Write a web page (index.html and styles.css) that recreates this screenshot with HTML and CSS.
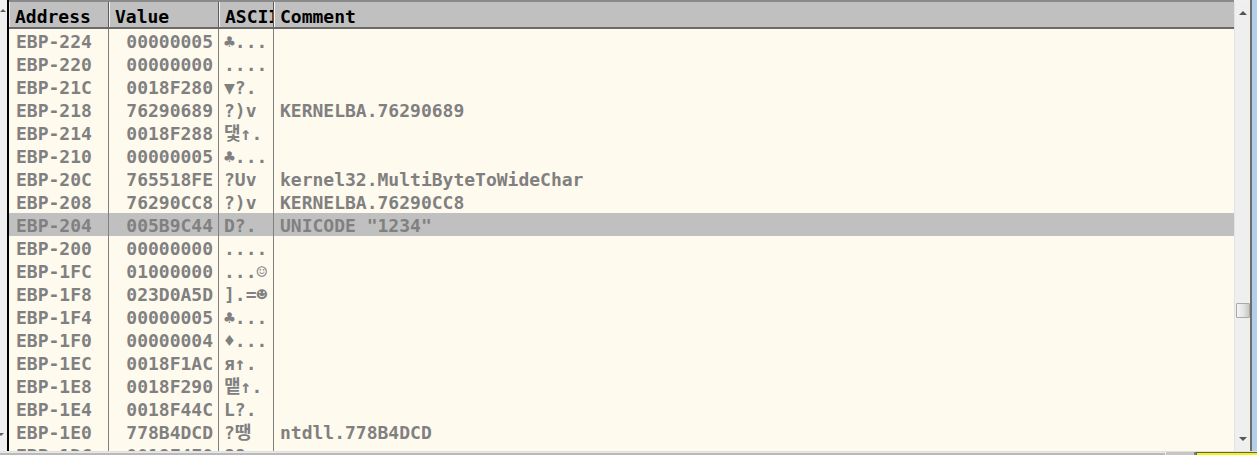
FILE: index.html
```html
<!DOCTYPE html>
<html>
<head>
<meta charset="utf-8">
<link rel="stylesheet" href="styles.css">
</head>
<body>
<div class="window">
  <div class="main">
    <div class="lstrip"><span class="larrow-up"></span><span class="larrow-dn"></span></div>
    <div class="edge"></div>
    <div class="pane">
      <div class="hdr">
        <div class="hc c-addr">Address</div>
        <div class="hc c-val">Value</div>
        <div class="hc c-asc">ASCII</div>
        <div class="hc c-cmt">Comment</div>
      </div>
      <div class="rows">
        <div class="row"><div class="c c-addr">EBP-224</div><div class="c c-val">00000005</div><div class="c c-asc">♣...</div><div class="c c-cmt"></div></div>
        <div class="row"><div class="c c-addr">EBP-220</div><div class="c c-val">00000000</div><div class="c c-asc">....</div><div class="c c-cmt"></div></div>
        <div class="row"><div class="c c-addr">EBP-21C</div><div class="c c-val">0018F280</div><div class="c c-asc">▼?.</div><div class="c c-cmt"></div></div>
        <div class="row"><div class="c c-addr">EBP-218</div><div class="c c-val">76290689</div><div class="c c-asc">?)v</div><div class="c c-cmt">KERNELBA.76290689</div></div>
        <div class="row"><div class="c c-addr">EBP-214</div><div class="c c-val">0018F288</div><div class="c c-asc">댗↑.</div><div class="c c-cmt"></div></div>
        <div class="row"><div class="c c-addr">EBP-210</div><div class="c c-val">00000005</div><div class="c c-asc">♣...</div><div class="c c-cmt"></div></div>
        <div class="row"><div class="c c-addr">EBP-20C</div><div class="c c-val">765518FE</div><div class="c c-asc">?Uv</div><div class="c c-cmt">kernel32.MultiByteToWideChar</div></div>
        <div class="row"><div class="c c-addr">EBP-208</div><div class="c c-val">76290CC8</div><div class="c c-asc">?)v</div><div class="c c-cmt">KERNELBA.76290CC8</div></div>
        <div class="row sel"><div class="c c-addr">EBP-204</div><div class="c c-val">005B9C44</div><div class="c c-asc">D?.</div><div class="c c-cmt">UNICODE "1234"</div></div>
        <div class="row"><div class="c c-addr">EBP-200</div><div class="c c-val">00000000</div><div class="c c-asc">....</div><div class="c c-cmt"></div></div>
        <div class="row"><div class="c c-addr">EBP-1FC</div><div class="c c-val">01000000</div><div class="c c-asc">...☺</div><div class="c c-cmt"></div></div>
        <div class="row"><div class="c c-addr">EBP-1F8</div><div class="c c-val">023D0A5D</div><div class="c c-asc">].=☻</div><div class="c c-cmt"></div></div>
        <div class="row"><div class="c c-addr">EBP-1F4</div><div class="c c-val">00000005</div><div class="c c-asc">♣...</div><div class="c c-cmt"></div></div>
        <div class="row"><div class="c c-addr">EBP-1F0</div><div class="c c-val">00000004</div><div class="c c-asc">♦...</div><div class="c c-cmt"></div></div>
        <div class="row"><div class="c c-addr">EBP-1EC</div><div class="c c-val">0018F1AC</div><div class="c c-asc">я↑.</div><div class="c c-cmt"></div></div>
        <div class="row"><div class="c c-addr">EBP-1E8</div><div class="c c-val">0018F290</div><div class="c c-asc">맽↑.</div><div class="c c-cmt"></div></div>
        <div class="row"><div class="c c-addr">EBP-1E4</div><div class="c c-val">0018F44C</div><div class="c c-asc">L?.</div><div class="c c-cmt"></div></div>
        <div class="row"><div class="c c-addr">EBP-1E0</div><div class="c c-val">778B4DCD</div><div class="c c-asc">?땡</div><div class="c c-cmt">ntdll.778B4DCD</div></div>
        <div class="row"><div class="c c-addr">EBP-1DC</div><div class="c c-val">0018F4E0</div><div class="c c-asc">??.</div><div class="c c-cmt"></div></div>
      </div>
    </div>
    <div class="vscroll">
      <span class="arrow-up"></span>
      <div class="track"><div class="thumb"></div></div>
      <span class="arrow-dn"></span>
    </div>
    <div class="redge"></div>
    <div class="blue"></div>
  </div>
  <div class="bottombar">
    <div class="bb-fill"></div>
    <div class="bb-tab"></div>
    <div class="bb-tab2"></div>
    <div class="bb-yellow"></div>
  </div>
</div>
</body>
</html>
```

FILE: styles.css
```css
html, body {
  margin: 0;
  padding: 0;
  width: 1257px;
  height: 455px;
  overflow: hidden;
  background: #f0f0f0;
}

.window {
  display: flex;
  flex-direction: column;
  width: 1257px;
  height: 455px;
}

.main {
  display: flex;
  height: 451px;
  overflow: hidden;
}

.lstrip {
  width: 7px;
  background: #f0f0f0;
  display: flex;
  flex-direction: column;
  justify-content: space-between;
  padding: 9px 0 15px 0;
  box-sizing: border-box;
}

.larrow-up {
  display: block;
  width: 0;
  height: 0;
  border-left: 3px solid transparent;
  border-right: 3px solid transparent;
  border-bottom: 3px solid #606060;
}

.larrow-dn {
  display: block;
  width: 0;
  height: 0;
  margin-left: -2px;
  border-left: 3px solid transparent;
  border-right: 3px solid transparent;
  border-top: 3px solid #606060;
}

.edge {
  width: 2px;
  background: #000;
}

.pane {
  width: 1225px;
  background: #fffaee;
  overflow: hidden;
  font-family: "DejaVu Sans Mono", "Noto Sans CJK KR", monospace;
  font-weight: bold;
  font-size: 18px;
}

.hdr {
  display: grid;
  grid-template-columns: 100px 110px 55px 1fr;
  height: 29px;
  box-sizing: border-box;
  border-top: 2px solid #8a8a8a;
  border-bottom: 2px solid #6a6a6a;
  background: #c0c0c0;
  color: #000;
}

.hc {
  box-sizing: border-box;
  padding: 5px 0 0 6px;
  line-height: 20px;
  white-space: nowrap;
  overflow: hidden;
  border-right: 1px solid #5a5a5a;
  box-shadow: inset 1px 0 0 #f4f4f4;
}

.hc.c-cmt {
  border-right: none;
}

.hdr .c-addr {
  box-shadow: inset 1px 0 0 #e8e8e8;
}

.rows {
  color: #808080;
}

.row {
  display: grid;
  grid-template-columns: 100px 110px 55px 1fr;
  height: 23px;
}

.row.sel {
  background: #c0c0c0;
}

.c {
  box-sizing: border-box;
  padding: 3px 0 0 7px;
  line-height: 20px;
  white-space: nowrap;
  overflow: hidden;
  border-right: 1px solid #808080;
}

.c.c-val {
  text-align: right;
  padding: 3px 5px 0 0;
}

.c.c-asc {
  padding-left: 5px;
}

.c.c-cmt {
  border-right: none;
  padding-left: 6px;
}

.vscroll {
  width: 16px;
  margin-top: 2px;
  background: #efefef;
  border-left: 1px solid #e2e2e2;
  box-sizing: border-box;
  display: flex;
  flex-direction: column;
  align-items: center;
  padding: 9px 0 10px 0;
}

.arrow-up {
  display: block;
  width: 0;
  height: 0;
  border-left: 4px solid transparent;
  border-right: 4px solid transparent;
  border-bottom: 4px solid #555;
}

.arrow-dn {
  display: block;
  width: 0;
  height: 0;
  border-left: 4px solid transparent;
  border-right: 4px solid transparent;
  border-top: 4px solid #555;
}

.track {
  flex: 1;
  width: 100%;
  display: flex;
  flex-direction: column;
  align-items: center;
  padding-top: 288px;
  box-sizing: border-box;
}

.thumb {
  width: 14px;
  height: 15px;
  box-sizing: border-box;
  border: 1px solid #a9a9a9;
  border-radius: 1px;
  background: linear-gradient(to right, #f4f4f4 0%, #e6e6e6 50%, #c8c8c8 100%);
}

.redge {
  width: 2px;
  background: #6d6d6d;
}

.blue {
  width: 5px;
  background: #b4cfe9;
}

.bottombar {
  display: flex;
  height: 4px;
  background: #c8c8c8;
  border-top: 1px solid #e0e0e0;
  box-sizing: border-box;
}

.bb-fill {
  flex: 1;
  background: #b9b9b9;
  border-top: 1px solid #e8e8e8;
}

.bb-tab {
  width: 28px;
  background: #c6c6c6;
  border-left: 1px solid #f0f0f0;
}

.bb-tab2 {
  width: 2px;
  background: #808080;
}

.bb-yellow {
  width: 61px;
  background: #f7f500;
  border-left: 1px solid #606060;
  border-top: 1px solid #606060;
  box-sizing: border-box;
}
```
